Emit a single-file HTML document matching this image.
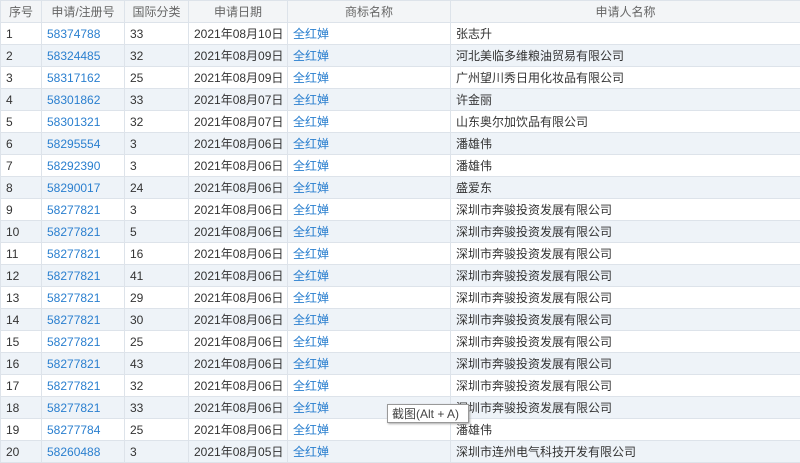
<!DOCTYPE html><html><head><meta charset="utf-8"><style>
body{margin:0;width:800px;height:462px;overflow:hidden;background:#fff;font-family:"Liberation Sans","Noto Sans CJK SC",sans-serif;font-size:12px;color:#333}
table{border-collapse:collapse;table-layout:fixed;width:800px}
td,th{height:21px;border:1px solid #dde3ea;padding:0 0 0 5px;white-space:nowrap;overflow:hidden;text-align:left;font-weight:normal}
th{background:#f3f5f7;color:#666;text-align:center;padding:0;height:21px}
tr:nth-child(odd) td{background:#eef3f8}
a{color:#2a7fcf;text-decoration:none}
.tip{position:absolute;left:387px;top:404px;width:82px;height:19px;background:#fff;border:1px solid #999;box-shadow:1px 1px 2px #aaa;font-size:12px;line-height:19px;padding-left:4px;box-sizing:border-box;color:#444}
</style></head><body>
<table>
<colgroup><col style="width:41px"><col style="width:83px"><col style="width:64px"><col style="width:99px"><col style="width:163px"><col style="width:350px"></colgroup>
<tr><th>序号</th><th>申请/注册号</th><th>国际分类</th><th>申请日期</th><th>商标名称</th><th>申请人名称</th></tr>
<tr><td>1</td><td><a>58374788</a></td><td>33</td><td>2021年08月10日</td><td><a>全红婵</a></td><td>张志升</td></tr>
<tr><td>2</td><td><a>58324485</a></td><td>32</td><td>2021年08月09日</td><td><a>全红婵</a></td><td>河北美临多维粮油贸易有限公司</td></tr>
<tr><td>3</td><td><a>58317162</a></td><td>25</td><td>2021年08月09日</td><td><a>全红婵</a></td><td>广州望川秀日用化妆品有限公司</td></tr>
<tr><td>4</td><td><a>58301862</a></td><td>33</td><td>2021年08月07日</td><td><a>全红婵</a></td><td>许金丽</td></tr>
<tr><td>5</td><td><a>58301321</a></td><td>32</td><td>2021年08月07日</td><td><a>全红婵</a></td><td>山东奥尔加饮品有限公司</td></tr>
<tr><td>6</td><td><a>58295554</a></td><td>3</td><td>2021年08月06日</td><td><a>全红婵</a></td><td>潘雄伟</td></tr>
<tr><td>7</td><td><a>58292390</a></td><td>3</td><td>2021年08月06日</td><td><a>全红婵</a></td><td>潘雄伟</td></tr>
<tr><td>8</td><td><a>58290017</a></td><td>24</td><td>2021年08月06日</td><td><a>全红婵</a></td><td>盛爱东</td></tr>
<tr><td>9</td><td><a>58277821</a></td><td>3</td><td>2021年08月06日</td><td><a>全红婵</a></td><td>深圳市奔骏投资发展有限公司</td></tr>
<tr><td>10</td><td><a>58277821</a></td><td>5</td><td>2021年08月06日</td><td><a>全红婵</a></td><td>深圳市奔骏投资发展有限公司</td></tr>
<tr><td>11</td><td><a>58277821</a></td><td>16</td><td>2021年08月06日</td><td><a>全红婵</a></td><td>深圳市奔骏投资发展有限公司</td></tr>
<tr><td>12</td><td><a>58277821</a></td><td>41</td><td>2021年08月06日</td><td><a>全红婵</a></td><td>深圳市奔骏投资发展有限公司</td></tr>
<tr><td>13</td><td><a>58277821</a></td><td>29</td><td>2021年08月06日</td><td><a>全红婵</a></td><td>深圳市奔骏投资发展有限公司</td></tr>
<tr><td>14</td><td><a>58277821</a></td><td>30</td><td>2021年08月06日</td><td><a>全红婵</a></td><td>深圳市奔骏投资发展有限公司</td></tr>
<tr><td>15</td><td><a>58277821</a></td><td>25</td><td>2021年08月06日</td><td><a>全红婵</a></td><td>深圳市奔骏投资发展有限公司</td></tr>
<tr><td>16</td><td><a>58277821</a></td><td>43</td><td>2021年08月06日</td><td><a>全红婵</a></td><td>深圳市奔骏投资发展有限公司</td></tr>
<tr><td>17</td><td><a>58277821</a></td><td>32</td><td>2021年08月06日</td><td><a>全红婵</a></td><td>深圳市奔骏投资发展有限公司</td></tr>
<tr><td>18</td><td><a>58277821</a></td><td>33</td><td>2021年08月06日</td><td><a>全红婵</a></td><td>深圳市奔骏投资发展有限公司</td></tr>
<tr><td>19</td><td><a>58277784</a></td><td>25</td><td>2021年08月06日</td><td><a>全红婵</a></td><td>潘雄伟</td></tr>
<tr><td>20</td><td><a>58260488</a></td><td>3</td><td>2021年08月05日</td><td><a>全红婵</a></td><td>深圳市连州电气科技开发有限公司</td></tr>
</table>
<div class="tip">截图(Alt + A)</div>
</body></html>
